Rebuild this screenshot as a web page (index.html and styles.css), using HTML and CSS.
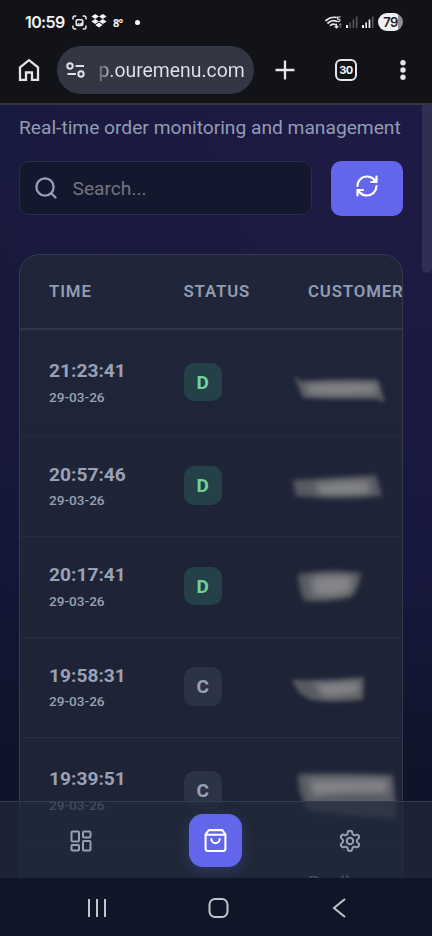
FILE: index.html
```
<!DOCTYPE html>
<html lang="en">
<head>
<meta charset="utf-8">
<meta name="viewport" content="width=device-width">
<title>Orders</title>
<link rel="stylesheet" href="styles.css">
</head>
<body>
<div class="phone">
  <header class="chrome">
    <div class="status">
      <span class="clock">10:59</span>
      <svg class="s-shot" width="15" height="15" viewBox="0 0 15 15" fill="none" stroke="#ececf0" stroke-width="1.5"><path d="M1 4.5V3q0-2 2-2h1.300M10.700 1H12q2 0 2 2v1.500M14 10.500V12q0 2-2 2h-1.300M4.300 14H3q-2 0-2-2v-1.500"/><rect x="4.200" y="4.800" width="6.600" height="5.600" rx="1.200"/><path d="M4.500 9.500l2-1.500 1.500.800 2-1.800v3z" fill="#ececf0" stroke="none"/></svg>
      <svg class="s-drop" width="16" height="14" viewBox="0 0 16 14" fill="#f4f4f6"><path d="M4.200 0L8 2.500 4.200 5 .400 2.500zM11.800 0l3.800 2.500L11.800 5 8 2.500zM4.200 5L8 7.500 4.200 10 .400 7.500zM11.800 5l3.800 2.500-3.800 2.500L8 7.500zM4.300 10.900L8 8.500l3.700 2.400L8 13.400z"/></svg>
      <span class="temp">8º</span>
      <span class="dot"></span>
      <span class="grow"></span>
      <svg class="s-wifi" width="17" height="13" viewBox="0 0 17 13" fill="none" stroke="#e6e6ea" stroke-width="1.700" stroke-linecap="round"><path d="M1 4.500Q5.500.500 11 1.400M3 7q4-3.600 8.500-1.700M5.500 9.400q2.500-2 4.800-.800"/><path d="M12.300 1h3M12.500 1v2.200q3-.400 2.500 1.600-.600 1.200-2.500.600" stroke-width="1.100"/><path d="M11.500 8v4M10 10.500l1.500 1.500 1.400-1.500" stroke-width="1.200"/><path d="M15.300 11.500V7.700M14 9l1.300-1.400L16.500 9" stroke="#77777d" stroke-width="1"/></svg>
      <svg class="s-sig" width="12" height="12" viewBox="0 0 12 12"><path d="M0 9h2v3H0z" fill="#eee"/><path d="M3.300 6.500h1.600V12H3.300zM6.600 3.500h1.600V12H6.600zM9.900.500h1.600V12H9.900z" fill="#56565b"/></svg>
      <svg class="s-sig2" width="12" height="12" viewBox="0 0 12 12"><path d="M0 9h2v3H0zM3.300 6.500h1.700V12H3.300zM6.600 3.500h1.700V12H6.600z" fill="#eee"/><path d="M9.900.500h1.600V12H9.900z" fill="#56565b"/></svg>
      <span class="battery">79</span>
    </div>
    <div class="toolbar">
      <svg class="t-home" width="22" height="24" viewBox="0 0 22 24" fill="none" stroke="#e3e3e8" stroke-width="2.300"><path d="M2 9.300L11 2.200l9 7.100v12.500h-6v-7.300H8v7.300H2z"/></svg>
      <div class="url">
        <svg width="20" height="16" viewBox="0 0 20 16" fill="none" stroke="#e0e1e8" stroke-width="2"><circle cx="4" cy="4" r="2.700"/><path d="M9.500 4H18M1.500 12H10"/><circle cx="15" cy="12" r="2.700"/></svg>
        <span class="addr">p.ouremenu.com</span>
      </div>
      <svg class="t-plus" width="20" height="20" viewBox="0 0 20 20" stroke="#e8e8ec" stroke-width="2.300"><path d="M10 .500v19M.500 10h19"/></svg>
      <span class="tabs">30</span>
      <svg class="t-more" width="6" height="20" viewBox="0 0 6 20" fill="#e6e6ea"><circle cx="3" cy="2.800" r="2.700"/><circle cx="3" cy="10" r="2.700"/><circle cx="3" cy="17.200" r="2.700"/></svg>
    </div>
  </header>

  <main class="page">
    <p class="subtitle">Real-time order monitoring and management</p>
    <div class="controls">
      <div class="search">
        <svg width="24" height="24" viewBox="0 0 24 24" fill="none" stroke="#94a0b8" stroke-width="2.300" stroke-linecap="round"><circle cx="11" cy="11" r="8.600"/><path d="M17.200 17.200l4.300 4.300"/></svg>
        <span>Search...</span>
      </div>
      <div class="refresh">
        <svg width="24" height="24" viewBox="0 0 24 24" fill="none" stroke="#fff" stroke-width="2.200" stroke-linecap="round" stroke-linejoin="round"><path d="M2.500 12A9.500 9.500 0 0 1 12 2.500a10 10 0 0 1 7 2.900L21.500 8M21.500 2.500V8H16M21.500 12A9.500 9.500 0 0 1 12 21.500a10 10 0 0 1-7-2.900L2.500 16M8 16H2.500v5.500"/></svg>
      </div>
    </div>
    <section class="card">
      <div class="row head"><span>TIME</span><span>STATUS</span><span>CUSTOMER</span></div>
      <div class="row tall">
        <div><div class="time">21:23:41</div><div class="date">29-03-26</div></div>
        <span class="badge done">D</span>
        <svg class="smudge" width="110" height="60" viewBox="0 0 110 60"><path d="M3 24L10 29Q48 27 87 28L94 50 84 47Q48 47 12 46z"/><path class="core" d="M14 33Q50 30 85 32L87 41Q50 44 18 42z"/></svg>
      </div>
      <div class="row">
        <div><div class="time">20:57:46</div><div class="date">29-03-26</div></div>
        <span class="badge done">D</span>
        <svg class="smudge soft" width="110" height="60" viewBox="0 0 110 60"><path d="M2 25Q46 23 85 20L91 41Q48 44 5 41z"/><path class="core" d="M24 29Q50 26 78 26L79 38Q50 41 28 39z"/></svg>
      </div>
      <div class="row">
        <div><div class="time">20:17:41</div><div class="date">29-03-26</div></div>
        <span class="badge done">D</span>
        <svg class="smudge soft" width="110" height="60" viewBox="0 0 110 60"><path d="M7 18Q40 13 70 17 68 34 60 41 39 46 14 45 8 38 7 18z"/><path class="core" d="M20 22Q42 17 62 21L59 37Q42 42 22 39z"/></svg>
      </div>
      <div class="row">
        <div><div class="time">19:58:31</div><div class="date">29-03-26</div></div>
        <span class="badge">C</span>
        <svg class="smudge" width="110" height="60" viewBox="0 0 110 60"><path d="M1 23L40 23 73 20 72 43Q45 46 20 43L8 36z"/><path class="core" d="M22 27L68 25 68 36 34 40z"/></svg>
      </div>
      <div class="row tall">
        <div><div class="time">19:39:51</div><div class="date">29-03-26</div></div>
        <span class="badge">C</span>
        <svg class="smudge soft" width="110" height="60" viewBox="0 0 110 60"><path d="M7 14Q50 12 102 15L106 58Q70 58 16 50L8 30z"/><path class="core" d="M18 20H97L96 33Q55 31 22 36z"/></svg>
      </div>
      <div class="row last"><span></span><span></span><span class="name">Paella</span></div>
    </section>
    <div class="scrollbar"></div>
    <nav class="nav">
      <div class="tab"><svg width="24" height="24" viewBox="0 0 24 24" fill="none" stroke="#94a0b4" stroke-width="2"><rect x="2.500" y="2.500" width="7.500" height="10" rx="1"/><rect x="14" y="2.500" width="7.500" height="6" rx="1"/><rect x="14" y="12" width="7.500" height="9.500" rx="1"/><rect x="2.500" y="16" width="7.500" height="5.500" rx="1"/></svg></div>
      <div class="tab"><span class="active"><svg width="25" height="25" viewBox="0 0 24 24" fill="none" stroke="#fff" stroke-width="2" stroke-linecap="round" stroke-linejoin="round"><path d="M5.500 2h13L21.500 6v14a2 2 0 0 1-2 2h-15a2 2 0 0 1-2-2V6zM2.800 6.500h18.400M16 10.500a4 4 0 0 1-8 0"/></svg></span></div>
      <div class="tab"><svg width="24" height="24" viewBox="0 0 24 24" fill="none" stroke="#94a0b4" stroke-width="2" stroke-linejoin="round"><path d="M9.700 4.100a2.300 2.300 0 0 1 4.600 0 2.300 2.300 0 0 0 3.300 1.900 2.300 2.300 0 0 1 2.300 4 2.300 2.300 0 0 0 0 3.900 2.300 2.300 0 0 1-2.300 4 2.300 2.300 0 0 0-3.300 1.900 2.300 2.300 0 0 1-4.600 0 2.300 2.300 0 0 0-3.300-1.900 2.300 2.300 0 0 1-2.300-4 2.300 2.300 0 0 0 0-3.900 2.300 2.300 0 0 1 2.300-4 2.300 2.300 0 0 0 3.300-1.900"/><circle cx="12" cy="12" r="3.200"/></svg></div>
    </nav>
  </main>

  <footer class="system">
    <svg width="20" height="20" viewBox="0 0 20 20" stroke="#c3c4c8" stroke-width="2"><path d="M2 1v18M10 1v18M18 1v18"/></svg>
    <svg width="22" height="22" viewBox="0 0 22 22" fill="none" stroke="#c3c4c8" stroke-width="2"><rect x="1.500" y="2" width="18" height="18" rx="5.500"/></svg>
    <svg width="14" height="22" viewBox="0 0 14 22" fill="none" stroke="#c3c4c8" stroke-width="2"><path d="M13 2L2 11 13 20"/></svg>
  </footer>
</div>
</body>
</html>
```
FILE: styles.css
```
* { box-sizing: border-box; }
body { margin: 0; background: #101527; font-family: Roboto, "Liberation Sans", sans-serif; }
svg { display: block; flex: none; }
.phone { width: 432px; height: 936px; display: flex; flex-direction: column; overflow: hidden; }

.chrome { flex: none; height: 105px; background: #111318; border-bottom: 2px solid #36363d; color: #f3f3f6; }
.status { height: 44px; display: flex; align-items: center; padding: 0 29px 0 25px; }
.clock { width: 47px; font: 600 16px Inter, sans-serif; letter-spacing: -0.600px; white-space: nowrap; }
.s-drop { margin-left: 4px; margin-top: -2px; }
.temp { margin-left: 6px; width: 22px; font: 700 11px "Noto Sans", sans-serif; letter-spacing: -0.500px; }
.dot { width: 5px; height: 5px; border-radius: 50%; background: #fff; }
.grow { flex: 1; }
.s-sig { margin-left: 4px; }
.s-sig2 { margin-left: 4px; }
.battery { width: 25px; height: 18px; margin-left: 4px; border-radius: 9px; background: linear-gradient(90deg, #f1f1f4 79%, #8e8e93 79%); color: #202126; font: 600 13px/18px Inter, sans-serif; text-align: center; letter-spacing: -0.500px; }
.toolbar { height: 52px; display: flex; align-items: center; padding: 0 26px 0 18px; }
.url { width: 197px; height: 48px; margin-left: 17.400px; padding-left: 9px; border-radius: 24px; background: #323743; display: flex; align-items: center; }
.addr { margin-left: 12px; font-size: 19.400px; color: #e2e3ea; background: linear-gradient(90deg, #62656f 0, #e2e3ea 16px); -webkit-background-clip: text; background-clip: text; -webkit-text-fill-color: transparent; }
.t-plus { margin-left: 21px; }
.tabs { width: 22px; height: 22px; margin-left: 39.500px; border: 2.300px solid #e6e6ea; border-radius: 6px; font: 700 11px/18px Inter, sans-serif; text-align: center; letter-spacing: -0.500px; }
.t-more { margin-left: auto; }

.page { position: relative; flex: 1; min-height: 0; overflow: hidden; padding: 8.500px 29px 0 19px; background: radial-gradient(circle at 100% 0, #1e1a46 0, rgba(29,26,67,.800) 32%, rgba(20,24,54,0) 75%), linear-gradient(180deg, #15193a 0, #161739 35%, #131739 58%, #10142a 82%); }
.subtitle { margin: 0; font-size: 19.200px; line-height: 28px; color: #929cb3; white-space: nowrap; }
.controls { display: flex; gap: 19px; margin-top: 19.500px; margin-right: -0.400px; }
.search { flex: 1; height: 54px; padding-left: 13.500px; display: flex; align-items: center; gap: 15px; border: 1px solid #2a2d43; border-radius: 10px; background: #14182e; font-size: 19.200px; color: #74757b; }
.refresh { width: 72.700px; height: 55px; padding-bottom: 5px; display: grid; place-items: center; border-radius: 10px; background: #6366ea; }
.card { margin-top: 38px; height: 700px; border: 1px solid #343a4d; border-radius: 20px; background: linear-gradient(180deg, #20263a, #1e2435 50%); overflow: hidden; }
.row { height: 100.600px; display: grid; grid-template-columns: 134.500px 124.500px 1fr; align-items: center; padding: 0 0 1.500px 29px; border-bottom: 1px solid #272d3f; color: #98a1b5; }
.tall { height: 106.400px; }
.head { height: 75px; padding-bottom: 1px; border-bottom: 2px solid #303548; font-size: 16.800px; font-weight: 600; letter-spacing: .850px; color: #929cb1; white-space: nowrap; }
.last { border: 0; align-items: start; }
.name { padding-top: 26px; font-size: 19px; }
.time { font-size: 19.200px; line-height: 27px; font-weight: 700; }
.date { font-size: 13.600px; line-height: 20px; margin-top: 2.500px; font-weight: 500; }
.badge { width: 38.500px; height: 38.500px; border-radius: 10px; background: #2b3346; font-size: 19px; line-height: 39px; font-weight: 700; text-align: center; }
.done { background: #244148; color: #6ed3a0; }
.smudge { margin-left: -17px; overflow: visible; fill: #585a62; filter: blur(2.200px); }
.soft { filter: blur(2.800px); }
.core { fill: #858689; filter: blur(3px); }
.scrollbar { position: absolute; top: 0; right: 0; width: 10px; height: 168px; background: #322e53; border-radius: 0 0 5px 5px; }
.nav { position: absolute; left: 0; right: 0; bottom: 0; height: 77px; display: grid; grid-template-columns: repeat(3, 134.500px); padding: 1px 0 0 13.800px; border-top: 1px solid #343b4c; background: rgba(32, 42, 58, .720); }
.tab { display: grid; place-items: center; }
.active { width: 53px; height: 53px; border-radius: 14px; background: #6366ea; display: grid; place-items: center; box-shadow: 0 4px 14px rgba(99, 102, 241, .250); }
.system { flex: none; height: 58px; background: #101527; display: flex; align-items: center; justify-content: space-between; padding: 2px 86px 0 86.500px; }
```
